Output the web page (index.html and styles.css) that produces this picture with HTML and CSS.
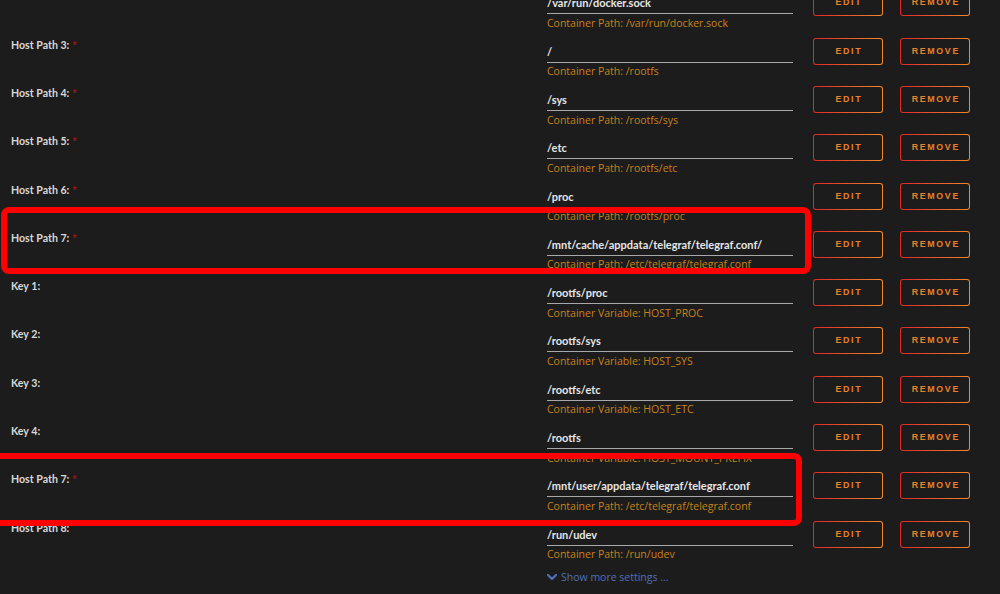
FILE: index.html
```html
<!DOCTYPE html>
<html lang="en">
<head>
<meta charset="utf-8">
<title>Container settings</title>
<link rel="stylesheet" href="styles.css">
</head>
<body>
<div class="page">
  <div class="rows">
    <div class="row">
      <div class="lbl"></div>
      <div class="field"><div class="val">/var/run/docker.sock</div><div class="hint">Container Path: /var/run/docker.sock</div></div>
      <div class="actions"><button class="btn">EDIT</button><button class="btn">REMOVE</button></div>
    </div>
    <div class="row">
      <div class="lbl">Host Path 3: <span class="req">*</span></div>
      <div class="field"><div class="val">/</div><div class="hint">Container Path: /rootfs</div></div>
      <div class="actions"><button class="btn">EDIT</button><button class="btn">REMOVE</button></div>
    </div>
    <div class="row">
      <div class="lbl">Host Path 4: <span class="req">*</span></div>
      <div class="field"><div class="val">/sys</div><div class="hint">Container Path: /rootfs/sys</div></div>
      <div class="actions"><button class="btn">EDIT</button><button class="btn">REMOVE</button></div>
    </div>
    <div class="row">
      <div class="lbl">Host Path 5: <span class="req">*</span></div>
      <div class="field"><div class="val">/etc</div><div class="hint">Container Path: /rootfs/etc</div></div>
      <div class="actions"><button class="btn">EDIT</button><button class="btn">REMOVE</button></div>
    </div>
    <div class="row">
      <div class="lbl">Host Path 6: <span class="req">*</span></div>
      <div class="field"><div class="val">/proc</div><div class="hint">Container Path: /rootfs/proc</div></div>
      <div class="actions"><button class="btn">EDIT</button><button class="btn">REMOVE</button></div>
    </div>
    <div class="row">
      <div class="lbl">Host Path 7: <span class="req">*</span></div>
      <div class="field"><div class="val">/mnt/cache/appdata/telegraf/telegraf.conf/</div><div class="hint">Container Path: /etc/telegraf/telegraf.conf</div></div>
      <div class="actions"><button class="btn">EDIT</button><button class="btn">REMOVE</button></div>
    </div>
    <div class="row">
      <div class="lbl">Key 1:</div>
      <div class="field"><div class="val">/rootfs/proc</div><div class="hint">Container Variable: HOST_PROC</div></div>
      <div class="actions"><button class="btn">EDIT</button><button class="btn">REMOVE</button></div>
    </div>
    <div class="row">
      <div class="lbl">Key 2:</div>
      <div class="field"><div class="val">/rootfs/sys</div><div class="hint">Container Variable: HOST_SYS</div></div>
      <div class="actions"><button class="btn">EDIT</button><button class="btn">REMOVE</button></div>
    </div>
    <div class="row">
      <div class="lbl">Key 3:</div>
      <div class="field"><div class="val">/rootfs/etc</div><div class="hint">Container Variable: HOST_ETC</div></div>
      <div class="actions"><button class="btn">EDIT</button><button class="btn">REMOVE</button></div>
    </div>
    <div class="row">
      <div class="lbl">Key 4:</div>
      <div class="field"><div class="val">/rootfs</div><div class="hint">Container Variable: HOST_MOUNT_PREFIX</div></div>
      <div class="actions"><button class="btn">EDIT</button><button class="btn">REMOVE</button></div>
    </div>
    <div class="row">
      <div class="lbl">Host Path 7: <span class="req">*</span></div>
      <div class="field"><div class="val">/mnt/user/appdata/telegraf/telegraf.conf</div><div class="hint">Container Path: /etc/telegraf/telegraf.conf</div></div>
      <div class="actions"><button class="btn">EDIT</button><button class="btn">REMOVE</button></div>
    </div>
    <div class="row">
      <div class="lbl">Host Path 8:</div>
      <div class="field"><div class="val">/run/udev</div><div class="hint">Container Path: /run/udev</div></div>
      <div class="actions"><button class="btn">EDIT</button><button class="btn">REMOVE</button></div>
    </div>
  </div>
  <div class="more">
    <svg class="chev" width="10" height="8" viewBox="0 0 10 8"><path d="M1 2 L5 6 L9 2" fill="none" stroke="#4f70b8" stroke-width="2.2" stroke-linecap="round" stroke-linejoin="round"/></svg>
    <span>Show more settings ...</span>
  </div>

  <!-- highlight frames drawn over the list -->
  <div class="mark mark-a"></div>
  <div class="mark mark-b"></div>
</div>
</body>
</html>
```

FILE: styles.css
```css
html, body {
  margin: 0;
  padding: 0;
  background: #1c1c1c;
}

.page {
  position: relative;
  width: 1000px;
  height: 594px;
  overflow: hidden;
  font-family: "Open Sans", "Liberation Sans", sans-serif;
}

.rows {
  margin-top: -10.6px;
}

.row {
  display: flex;
  height: 48.3px;
}

.lbl {
  width: 536px;
  padding-left: 11px;
  line-height: 14px;
  font-family: Lato, "Open Sans", sans-serif;
  font-size: 10.6px;
  font-weight: 700;
  color: #d8d8d8;
  white-space: nowrap;
}

.req {
  color: #c0141a;
  font-family: "Open Sans", sans-serif;
  font-size: 9px;
  font-weight: 400;
  vertical-align: 1px;
}

.field {
  width: 246px;
}

.val {
  padding-top: 7px;
  padding-bottom: 3px;
  line-height: 14px;
  font-family: Lato, "Open Sans", sans-serif;
  font-size: 11px;
  font-weight: 700;
  color: #e6e6e6;
  border-bottom: 1px solid #a8a8a8;
  white-space: nowrap;
}

.hint {
  margin-top: 1.5px;
  line-height: 14px;
  font-size: 10.5px;
  color: #c8821a;
  white-space: nowrap;
}

.actions {
  display: flex;
  gap: 17px;
  margin-left: 20px;
}

.btn {
  width: 70px;
  height: 27px;
  padding: 0;
  border: 1px solid transparent;
  border-radius: 3px;
  background:
    linear-gradient(#1c1c1c, #1c1c1c) padding-box,
    linear-gradient(90deg, #e2262a, #f2882b) border-box;
  color: #e8832a;
  font-family: "Liberation Sans", sans-serif;
  font-weight: 700;
  font-size: 8.8px;
  letter-spacing: 1.7px;
  text-indent: 1.7px;
  line-height: 25px;
}

.more {
  display: flex;
  align-items: center;
  gap: 4px;
  margin-left: 547px;
  margin-top: 1px;
  line-height: 14px;
  font-size: 10.5px;
  color: #4f70b8;
}

.chev {
  display: block;
}

.mark {
  position: absolute;
  border: 6.5px solid #ff0000;
  border-radius: 8px;
  box-sizing: border-box;
}

.mark-a {
  left: 1px;
  top: 207px;
  width: 810px;
  height: 67px;
}

.mark-b {
  left: -12px;
  top: 453px;
  width: 814px;
  height: 73px;
}
```
